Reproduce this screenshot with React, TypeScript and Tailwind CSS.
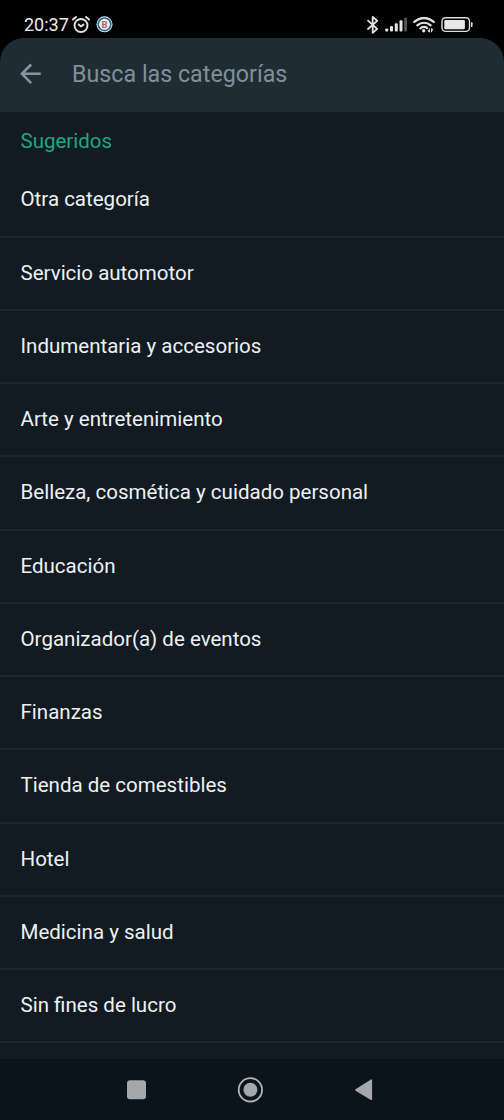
const categories = [
  "Otra categoría",
  "Servicio automotor",
  "Indumentaria y accesorios",
  "Arte y entretenimiento",
  "Belleza, cosmética y cuidado personal",
  "Educación",
  "Organizador(a) de eventos",
  "Finanzas",
  "Tienda de comestibles",
  "Hotel",
  "Medicina y salud",
  "Sin fines de lucro",
];

function AlarmIcon() {
  return (
    <svg className="ml-[3px] h-[18px] w-[18px]" viewBox="0 0 18 18" fill="none" stroke="#e4e4e4" strokeWidth="1.9" strokeLinecap="round">
      <circle cx="9" cy="9.5" r="6.5" />
      <path d="M1 3.6 4 1.1M17 3.6 14 1.1" />
      <path d="M6.7 8.5 9 10.6 11.5 8.5" strokeLinejoin="round" />
    </svg>
  );
}

function BadgeIcon() {
  return (
    <svg className="ml-[6px] h-[17px] w-[17px]" viewBox="0 0 17 17">
      <circle cx="8.5" cy="8.3" r="8" fill="#e8eef2" />
      <circle cx="8.5" cy="8.3" r="6.3" fill="none" stroke="#27668a" strokeWidth="1.6" />
      <text x="8.5" y="11.8" textAnchor="middle" fontFamily="Roboto, sans-serif" fontSize="9.5" fontWeight="700" fill="#c0586c">
        B
      </text>
    </svg>
  );
}

function BluetoothIcon() {
  return (
    <svg className="h-[18px] w-[12px]" viewBox="0 0 12 18" fill="none" stroke="#e4e4e4" strokeWidth="1.8" strokeLinejoin="round" strokeLinecap="round">
      <path d="M1 4.6 10.2 12.8 5.7 16.8V.9L10.2 4.8 1 13" />
    </svg>
  );
}

function SignalIcon() {
  return (
    <svg className="ml-[6px] h-[15px] w-[23px]" viewBox="0 0 23 15" fill="#e4e4e4">
      <rect x="0.2" y="11.5" width="3" height="3" rx="1" />
      <rect x="5" y="9" width="3" height="5.5" rx="1" />
      <rect x="9.8" y="6.3" width="3" height="8.2" rx="1" />
      <rect x="14.5" y="3.3" width="3" height="11.2" rx="1" />
      <rect x="19.2" y="0.5" width="2.8" height="14" rx="1" fill="#555" />
    </svg>
  );
}

function WifiIcon() {
  return (
    <svg className="ml-[5px] h-[16px] w-[22px]" viewBox="0 0 22 16" fill="none" stroke="#e4e4e4" strokeWidth="2.2" strokeLinecap="round">
      <path d="M1.3 4.9C7 -.2 15 -.2 20.7 4.9" />
      <path d="M4.3 8.3C8.2 4.9 13.8 4.9 17.7 8.3" />
      <path d="M7.4 11.4C9.6 9.6 12.2 9.6 14.1 11.1" />
      <circle cx="10.7" cy="13.8" r="1.7" fill="#e4e4e4" stroke="none" />
      <path d="M16.3 11.8V14.8M15.2 13.7 16.3 14.8M18.6 14.8V11.8M19.7 12.9 18.6 11.8" strokeWidth="1.1" />
    </svg>
  );
}

function BatteryIcon() {
  return (
    <svg className="ml-[6px] h-[16px] w-[33px]" viewBox="0 0 33 16">
      <rect x="1" y="0.8" width="27.5" height="13.6" rx="3.6" fill="none" stroke="#dedede" strokeWidth="1.4" />
      <rect x="3.3" y="3" width="20.6" height="9.2" rx="1.3" fill="#e8e8e8" />
      <path d="M30 5.3h.6a1 1 0 0 1 1 1v2.7a1 1 0 0 1-1 1H30z" fill="#dedede" />
    </svg>
  );
}

function StatusBar() {
  return (
    <div className="flex h-[37.5px] shrink-0 items-center justify-between pl-[24px] pr-[30px] pt-[11.5px]">
      <div className="flex items-center">
        <span className="w-[45px] whitespace-nowrap text-[18px] leading-[20px] text-[#ededed]">20:37</span>
        <AlarmIcon />
        <BadgeIcon />
      </div>
      <div className="flex items-center">
        <BluetoothIcon />
        <SignalIcon />
        <WifiIcon />
        <BatteryIcon />
      </div>
    </div>
  );
}

function SearchBar() {
  return (
    <header className="flex h-[74.5px] shrink-0 items-center rounded-t-[24px] bg-[#202c33] pl-[20px]">
      <svg className="mb-[2px] h-[22px] w-[22px]" viewBox="0 0 22 22" fill="none" stroke="#8696a0" strokeWidth="2.5">
        <path d="M20.8 10.8H2.3M11.2 1.5 1.9 10.8 11.2 20.1" />
      </svg>
      <span className="mb-[2px] ml-[30px] text-[23.25px] leading-[30px] text-[#809099]">Busca las categorías</span>
    </header>
  );
}

function NavBar() {
  return (
    <nav className="flex h-[61px] shrink-0 items-center bg-[#0b141b]">
      <svg className="ml-[127px] h-[20px] w-[20px]" viewBox="0 0 20 20">
        <rect x="0" y="0.2" width="19" height="19" rx="3" fill="#a5a8ab" />
      </svg>
      <svg className="ml-[90px] h-[26px] w-[26px]" viewBox="0 0 26 26">
        <circle cx="13.4" cy="12.8" r="11.7" fill="none" stroke="#b1b4b7" strokeWidth="1.8" />
        <circle cx="13.4" cy="12.8" r="7" fill="#a5a8ab" />
      </svg>
      <svg className="ml-[91px] h-[22px] w-[20px]" viewBox="0 0 20 22">
        <path d="M2 11 17.3 1.2V20.3Z" fill="#a5a8ab" stroke="#a5a8ab" strokeWidth="1.6" strokeLinejoin="round" />
      </svg>
    </nav>
  );
}

export default function App() {
  return (
    <div className="flex h-[1120px] w-[504px] flex-col overflow-hidden bg-black font-['Roboto',sans-serif]">
      <StatusBar />
      <SearchBar />
      <main className="min-h-0 flex-1 overflow-hidden bg-[#121b22]">
        <h2 className="flex h-[52.25px] items-center pl-[20.5px] pt-[5px] text-[20.5px] leading-[26px] text-[#1ba784]">
          Sugeridos
        </h2>
        <ul>
          {categories.map((name) => (
            <li
              key={name}
              className="flex h-[73.25px] items-center border-b-2 border-[#1d262d] pb-[1px] pl-[20.5px] text-[20.53px] leading-[26px] text-[#edf1f3]"
            >
              {name}
            </li>
          ))}
        </ul>
      </main>
      <NavBar />
    </div>
  );
}
